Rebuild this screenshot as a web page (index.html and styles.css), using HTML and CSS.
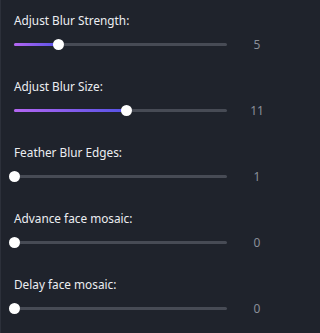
FILE: index.html
```html
<!DOCTYPE html>
<html>
<head>
<meta charset="utf-8">
<link rel="stylesheet" href="styles.css">
</head>
<body>
<div class="panel">
  <div class="setting">
    <div class="label">Adjust Blur Strength:</div>
    <div class="slider-row">
      <div class="track">
        <div class="fill" style="width:21.05%"></div>
        <div class="thumb" style="left:21.05%"></div>
      </div>
      <div class="value">5</div>
    </div>
  </div>
  <div class="setting">
    <div class="label">Adjust Blur Size:</div>
    <div class="slider-row">
      <div class="track">
        <div class="fill" style="width:52.63%"></div>
        <div class="thumb" style="left:52.63%"></div>
      </div>
      <div class="value">11</div>
    </div>
  </div>
  <div class="setting">
    <div class="label">Feather Blur Edges:</div>
    <div class="slider-row">
      <div class="track">
        <div class="thumb" style="left:0%"></div>
      </div>
      <div class="value">1</div>
    </div>
  </div>
  <div class="setting">
    <div class="label">Advance face mosaic:</div>
    <div class="slider-row">
      <div class="track">
        <div class="thumb" style="left:0%"></div>
      </div>
      <div class="value">0</div>
    </div>
  </div>
  <div class="setting">
    <div class="label">Delay face mosaic:</div>
    <div class="slider-row">
      <div class="track">
        <div class="thumb" style="left:0%"></div>
      </div>
      <div class="value">0</div>
    </div>
  </div>
</div>
</body>
</html>
```
FILE: styles.css
```css
html, body {
  margin: 0;
  padding: 0;
  background: #1f232c;
}
body {
  width: 277px;
  height: 333px;
  overflow: hidden;
  font-family: "Noto Sans", "Liberation Sans", sans-serif;
}
.panel {
  box-sizing: border-box;
  height: 333px;
  border-left: 1px solid #2c303a;
  padding: 12px 0 0 13px;
  display: flex;
  flex-direction: column;
}
.setting {
  height: 66px;
  flex: none;
  display: flex;
  flex-direction: column;
}
.label {
  font-size: 11.8px;
  line-height: 16px;
  color: #eceef2;
  height: 16px;
}
.slider-row {
  margin-top: 6px;
  height: 20px;
  display: flex;
  align-items: center;
}
.track {
  position: relative;
  flex: none;
  width: 213px;
  height: 3px;
  border-radius: 2px;
  background: #474b55;
}
.fill {
  position: absolute;
  left: 0;
  top: 0;
  height: 3px;
  border-radius: 2px;
  background: linear-gradient(90deg, #b466f2, #5553e6);
}
.thumb {
  position: absolute;
  top: 50%;
  width: 11px;
  height: 11px;
  margin-left: -5.5px;
  margin-top: -5.5px;
  border-radius: 50%;
  background: #ffffff;
}
.value {
  width: 60px;
  flex: none;
  text-align: center;
  font-size: 12px;
  color: #8a8f99;
}
```
